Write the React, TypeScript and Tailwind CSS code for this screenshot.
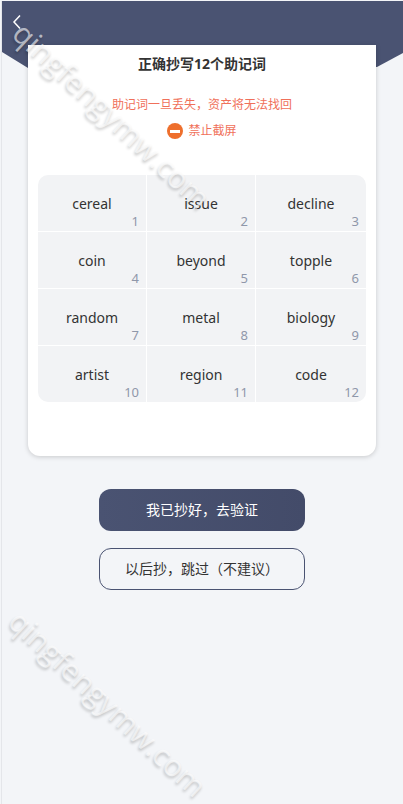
const words = [
  "cereal", "issue", "decline",
  "coin", "beyond", "topple",
  "random", "metal", "biology",
  "artist", "region", "code",
];

const Watermark = ({ className }: { className: string }) => (
  <div
    className={`absolute rotate-[43deg] origin-left whitespace-nowrap text-[30px] leading-none font-medium text-white/60 [font-family:'Open_Sans',sans-serif] [text-shadow:1px_2px_3px_rgba(0,0,0,0.22)] ${className}`}
  >
    qingfengymw.com
  </div>
);

export default function App() {
  return (
    <div className="relative h-[804px] w-[403px] overflow-hidden bg-[#f3f5f8] pl-px pt-px [font-family:'Noto_Sans','Noto_Sans_CJK_SC',sans-serif]">
      <div className="h-[803px] border-l border-[#e4e6ea]">
        <div className="h-[68px] bg-[#4a5372] [clip-path:polygon(0_0,100%_0,100%_52px,375px_66px,26px_67px,0_51px)]" />

        <div className="relative mx-[26px] -mt-[24px] h-[411px] w-[348px] rounded-b-xl bg-white px-[10px] shadow-[0_1px_5px_rgba(0,0,0,0.18)]">
          <h1 className="pt-[9px] text-center text-sm leading-5 font-bold text-[#333]">正确抄写12个助记词</h1>
          <p className="mt-[21px] text-center text-xs leading-5 text-[#f0705a]">助记词一旦丢失，资产将无法找回</p>
          <div className="mt-[6px] flex items-center justify-center gap-[5px] text-xs leading-5 text-[#f0705a]">
            <span className="flex h-[16px] w-[16px] items-center justify-center rounded-full bg-[#ee6f2d]">
              <span className="h-[3px] w-[10px] bg-white" />
            </span>
            禁止截屏
          </div>

          <div className="mt-[34px] grid grid-cols-[108px_108px_110px] gap-px overflow-hidden rounded-[10px]">
            {words.map((word, i) => (
              <div key={word} className="relative flex h-[56px] items-center justify-center bg-[#f2f3f5] pt-[2px] text-sm text-[#333]">
                {word}
                <span className="absolute right-[7px] bottom-[2px] text-[13px] leading-4 text-[#8f97aa]">{i + 1}</span>
              </div>
            ))}
          </div>
        </div>

        <div className="mt-[33px] flex flex-col items-center gap-[17px] pr-px text-sm">
          <button className="h-[42px] w-[206px] rounded-xl bg-gradient-to-r from-[#4a5372] to-[#434b69] text-white">我已抄好，去验证</button>
          <button className="h-[42px] w-[206px] rounded-xl border border-[#4a5372] text-[#333]">以后抄，跳过（不建议）</button>
        </div>
      </div>

      <Watermark className="left-[18px] top-[13px]" />
      <Watermark className="left-[14px] top-[601px]" />

      {/* back arrow sits above the watermark */}
      <svg width="12" height="16" viewBox="0 0 12 16" className="absolute left-[11px] top-[14px]" fill="none" stroke="#fff" strokeWidth="1.5">
        <path d="M9 1.5 L3 8 L9 14.5" />
      </svg>
    </div>
  );
}
